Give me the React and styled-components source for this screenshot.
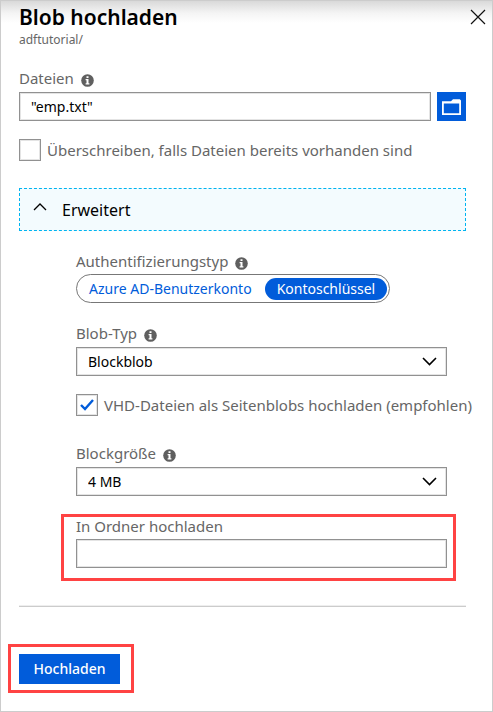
import React, { useState } from "react";
import styled, { createGlobalStyle, css } from "styled-components";

const blue = "#015cda";
const ink = "#000";
const muted = "#666";
const line = "#919191";

const GlobalStyle = createGlobalStyle`
  *, *::before, *::after { box-sizing: border-box; }
  body { margin: 0; background: #fff; }
  button, input, select { font: inherit; margin: 0; }
`;

const Panel = styled.form`
  min-height: 100vh;
  padding: 2px 26px 26px 18px;
  border: 1px solid #ccc;
  background: linear-gradient(#d9d9d9, #f4f4f4 12px, #fff 22px);
  color: ${muted};
  font: 15px/20px "Noto Sans", "Open Sans", sans-serif;
`;

const Header = styled.header`
  display: flex;
  justify-content: space-between;
  align-items: flex-start;
  margin: 0 -24px 20px 0;
`;

const Title = styled.h1`
  margin: 0;
  color: ${ink};
  font-size: 21px;
  font-weight: 600;
  line-height: 29px;
`;

const Subtitle = styled.p`
  margin: 0;
  font-size: 12px;
  line-height: 16px;
`;

const CloseButton = styled.button`
  display: grid;
  padding: 6px 4px;
  border: 0;
  background: none;
  cursor: pointer;
`;

const Field = styled.div`
  position: relative;
  margin: 20px ${(p) => (p.$inset ? "19px" : "0")} 0 0;
`;

const LabelRow = styled.div`
  display: flex;
  align-items: center;
  gap: 7px;
  margin-bottom: ${(p) => (p.$tight ? "3px" : "4px")};

  svg { margin-top: 4px; }
`;

const controlBox = css`
  width: 100%;
  min-width: 0;
  height: 29px;
  padding: 0 11px;
  border: 1px solid ${line};
  border-radius: 0;
  background: #fff;
  box-shadow: inset 0 0 0 1px #e4e4e4;
  color: ${ink};
  font-size: 14px;
`;

const TextBox = styled.input`
  ${controlBox}
`;

const FileRow = styled.div`
  display: flex;
  gap: 6px;
`;

const BrowseButton = styled.button`
  display: grid;
  place-items: center;
  flex: none;
  width: 29px;
  height: 29px;
  padding: 0;
  border: 0;
  background: ${blue};
  cursor: pointer;
`;

const SelectWrap = styled.div`
  display: grid;
  align-items: center;

  > * { grid-area: 1 / 1; }
  svg { justify-self: end; margin-right: 10px; pointer-events: none; }
`;

const SelectBox = styled.select`
  ${controlBox}
  appearance: none;
`;

const CheckRow = styled.label`
  display: flex;
  align-items: center;
  gap: 6px;
  margin-top: 18px;
  white-space: nowrap;
`;

const CheckWrap = styled.span`
  display: grid;
  place-items: center;
  flex: none;

  > * { grid-area: 1 / 1; }
  svg { pointer-events: none; }
`;

const CheckBox = styled.input`
  width: 22px;
  height: 22px;
  border: 1px solid ${line};
  background: #fff;
  box-shadow: inset 0 0 0 1px #e4e4e4;
  appearance: none;
`;

const Expander = styled.button`
  display: flex;
  align-items: center;
  gap: 15px;
  width: 100%;
  height: 43px;
  margin-top: 27px;
  padding: 0 13px;
  border: 1px dashed #00b4f0;
  background: #f3fbfe;
  color: ${ink};
  font-size: 16px;
  text-align: left;
  cursor: pointer;

  svg { margin-bottom: 6px; }
`;

const Advanced = styled.section`
  padding-left: 57px;
`;

const Switch = styled.div`
  display: inline-flex;
  align-items: center;
  gap: 1px;
  height: 29px;
  padding: 0 2px;
  border: 1px solid #777;
  border-radius: 15px;
  vertical-align: top;
`;

const Choice = styled.label`
  padding: 0 12px;
  border-radius: 11px;
  color: ${blue};
  font-size: 14px;
  line-height: 22px;
  white-space: nowrap;
  cursor: pointer;

  &:first-child { padding-left: 10px; }
  &:has(input:checked) { background: ${blue}; color: #fff; }
`;

const HiddenRadio = styled.input`
  position: absolute;
  opacity: 0;
  pointer-events: none;
`;

const highlight = css`
  content: "";
  position: absolute;
  border: 3px solid #ff4343;
  pointer-events: none;
`;

const FolderField = styled(Field)`
  &::after {
    ${highlight}
    inset: -2px -9px -13px -15px;
  }
`;

const LaterField = styled(Field)`
  margin-top: 27px;
`;

const Divider = styled.hr`
  height: 2px;
  margin: 37px 0 47px;
  border: solid #ccc;
  border-width: 0 0 1px;
  background: #eee;
`;

const SubmitWrap = styled.div`
  position: relative;
  width: fit-content;

  &::after {
    ${highlight}
    inset: -10px -14px -9px -11px;
  }
`;

const SubmitButton = styled.button`
  display: block;
  min-width: 101px;
  height: 30px;
  padding: 0 14px;
  border: 0;
  background: ${blue};
  color: #fff;
  font-size: 14px;
  font-weight: 500;
  cursor: pointer;
`;

const InfoIcon = () => (
  <svg width="13" height="13" viewBox="0 0 13 13" aria-hidden="true">
    <circle cx="6.5" cy="6.5" r="6.3" fill="#5f5f5f" />
    <path d="M5.5 2.2h2v1.9h-2zM4.6 5.1h2.9v4.2h.9v1.2H4.6V9.3h.9V6.3h-.9z" fill="#fff" />
  </svg>
);

const CloseIcon = () => (
  <svg width="16" height="16" viewBox="0 0 16 16" fill="none" stroke="#111" strokeWidth="1.2" aria-hidden="true">
    <path d="M1 1l14 14M15 1L1 15" />
  </svg>
);

const FolderIcon = () => (
  <svg width="19" height="16" viewBox="0 0 19 16" aria-hidden="true">
    <path d="M0 2.2h9L11 .3h6.8L19 1.5V16H0zM1.8 4.4v9.8h15.4V4.4z" fill="#fff" fillRule="evenodd" />
  </svg>
);

const ChevronUp = () => (
  <svg width="14" height="8" viewBox="0 0 14 8" fill="none" stroke="#000" strokeWidth="1.3" aria-hidden="true">
    <path d="M1 7l6-6 6 6" />
  </svg>
);

const ChevronDown = () => (
  <svg width="15" height="9" viewBox="0 0 15 9" fill="none" stroke="#000" strokeWidth="1.6" aria-hidden="true">
    <path d="M1 1l6.5 6.5L14 1" />
  </svg>
);

const CheckMark = () => (
  <svg width="14" height="12" viewBox="0 0 14 12" fill="none" stroke={blue} strokeWidth="2.4" aria-hidden="true">
    <path d="M1 6l4 4L13 1" />
  </svg>
);

function Check({ label, checked, onChange }) {
  return (
    <CheckRow>
      <CheckWrap>
        <CheckBox type="checkbox" checked={checked} onChange={(e) => onChange(e.target.checked)} />
        {checked && <CheckMark />}
      </CheckWrap>
      {label}
    </CheckRow>
  );
}

function Dropdown({ id, options }) {
  return (
    <SelectWrap>
      <SelectBox id={id}>
        {options.map((o) => (
          <option key={o}>{o}</option>
        ))}
      </SelectBox>
      <ChevronDown />
    </SelectWrap>
  );
}

export default function App() {
  const [overwrite, setOverwrite] = useState(false);
  const [vhd, setVhd] = useState(true);
  const [open, setOpen] = useState(true);
  const [auth, setAuth] = useState("Kontoschlüssel");

  return (
    <>
      <GlobalStyle />
      <Panel onSubmit={(e) => e.preventDefault()}>
        <Header>
          <div>
            <Title>Blob hochladen</Title>
            <Subtitle>adftutorial/</Subtitle>
          </div>
          <CloseButton type="button" aria-label="Schließen">
            <CloseIcon />
          </CloseButton>
        </Header>

        <Field>
          <LabelRow>
            <label htmlFor="files">Dateien</label>
            <InfoIcon />
          </LabelRow>
          <FileRow>
            <TextBox id="files" defaultValue={'"emp.txt"'} />
            <BrowseButton type="button" aria-label="Durchsuchen">
              <FolderIcon />
            </BrowseButton>
          </FileRow>
        </Field>

        <Check
          label="Überschreiben, falls Dateien bereits vorhanden sind"
          checked={overwrite}
          onChange={setOverwrite}
        />

        <Expander type="button" aria-expanded={open} onClick={() => setOpen(!open)}>
          {open ? <ChevronUp /> : <ChevronDown />}
          Erweitert
        </Expander>

        {open && (
          <Advanced>
            <Field role="radiogroup" aria-labelledby="auth-label">
              <LabelRow $tight>
                <span id="auth-label">Authentifizierungstyp</span>
                <InfoIcon />
              </LabelRow>
              <Switch>
                {["Azure AD-Benutzerkonto", "Kontoschlüssel"].map((name) => (
                  <Choice key={name}>
                    <HiddenRadio
                      type="radio"
                      name="auth"
                      checked={auth === name}
                      onChange={() => setAuth(name)}
                    />
                    {name}
                  </Choice>
                ))}
              </Switch>
            </Field>

            <Field $inset>
              <LabelRow>
                <label htmlFor="blob-type">Blob-Typ</label>
                <InfoIcon />
              </LabelRow>
              <Dropdown id="blob-type" options={["Blockblob", "Seitenblob", "Anfügeblob"]} />
            </Field>

            <Check
              label="VHD-Dateien als Seitenblobs hochladen (empfohlen)"
              checked={vhd}
              onChange={setVhd}
            />

            <LaterField $inset>
              <LabelRow>
                <label htmlFor="block-size">Blockgröße</label>
                <InfoIcon />
              </LabelRow>
              <Dropdown id="block-size" options={["4 MB", "8 MB", "16 MB"]} />
            </LaterField>

            <FolderField $inset>
              <LabelRow $tight>
                <label htmlFor="folder">In Ordner hochladen</label>
              </LabelRow>
              <TextBox id="folder" />
            </FolderField>
          </Advanced>
        )}

        <Divider />

        <SubmitWrap>
          <SubmitButton type="submit">Hochladen</SubmitButton>
        </SubmitWrap>
      </Panel>
    </>
  );
}
